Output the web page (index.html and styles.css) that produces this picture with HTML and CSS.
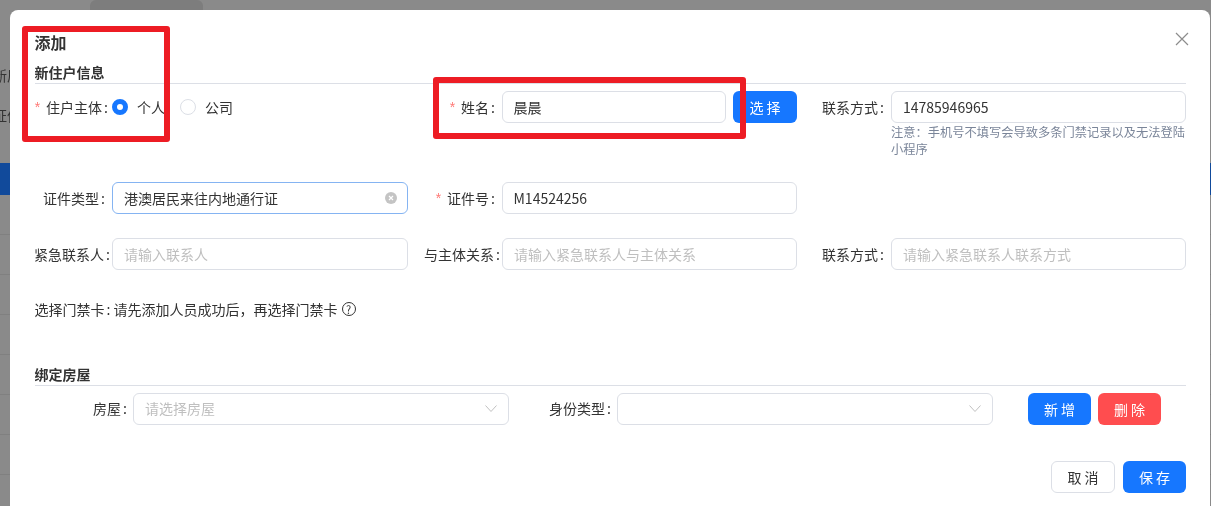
FILE: index.html
```html
<!DOCTYPE html>
<html lang="zh-CN">
<head>
<meta charset="utf-8">
<title>添加</title>
<link rel="stylesheet" href="styles.css">
</head>
<body>
<div class="page">
  <div class="backdrop">
    <div class="top-bar"><span class="top-pill"></span></div>
    <div class="bg-line">新居</div>
    <div class="bg-line">证件</div>
    <div class="bg-blue"></div>
    <div class="bg-row"></div><div class="bg-row"></div><div class="bg-row"></div>
    <div class="bg-row"></div><div class="bg-row"></div><div class="bg-row"></div>
    <div class="bg-row"></div>
  </div>

  <div class="modal">
    <svg class="close" viewBox="0 0 14 14" aria-label="关闭"><path d="M1 1l12 12M13 1L1 13"/></svg>
    <h2 class="title">添加</h2>
    <h3 class="section">新住户信息</h3>

    <div class="grid row-first">
      <div class="field">
        <label class="label label-radio"><i class="star">*</i>住户主体<b class="colon">:</b></label>
        <div class="radios">
          <span class="radio radio-on"></span><span class="radio-text">个人</span>
          <span class="radio"></span><span class="radio-text">公司</span>
        </div>
      </div>
      <div class="field">
        <label class="label"><i class="star">*</i>姓名<b class="colon">:</b></label>
        <div class="input input-name">晨晨</div>
        <button class="btn btn-primary btn-pick">选 择</button>
      </div>
      <div class="field field-top">
        <label class="label">联系方式<b class="colon">:</b></label>
        <div class="stack">
          <div class="input">14785946965</div>
          <p class="note">注意：手机号不填写会导致多条门禁记录以及无法登陆小程序</p>
        </div>
      </div>
    </div>

    <div class="grid row">
      <div class="field">
        <label class="label">证件类型<b class="colon">:</b></label>
        <div class="input input-focus">港澳居民来往内地通行证
          <svg class="clear" viewBox="0 0 12 12"><circle cx="6" cy="6" r="6"/><path d="M4 4l4 4M8 4l-4 4"/></svg>
        </div>
      </div>
      <div class="field">
        <label class="label"><i class="star">*</i>证件号<b class="colon">:</b></label>
        <div class="input input-id">M14524256</div>
      </div>
    </div>

    <div class="grid row">
      <div class="field">
        <label class="label label-tight">紧急联系人<b class="colon">:</b></label>
        <div class="input input-empty">请输入联系人</div>
      </div>
      <div class="field">
        <label class="label label-tight">与主体关系<b class="colon">:</b></label>
        <div class="input input-empty">请输入紧急联系人与主体关系</div>
      </div>
      <div class="field">
        <label class="label">联系方式<b class="colon">:</b></label>
        <div class="input input-empty">请输入紧急联系人联系方式</div>
      </div>
    </div>

    <div class="card-row">选择门禁卡<b class="colon">:</b> 请先添加人员成功后，再选择门禁卡<span class="help">?</span></div>

    <h3 class="section section-house">绑定房屋</h3>
    <div class="house">
      <div class="field">
        <label class="label label-grow">房屋<b class="colon">:</b></label>
        <div class="input input-empty input-select">请选择房屋
          <svg class="chev" viewBox="0 0 12 7"><path d="M.5.5L6 6.5 11.5.5"/></svg>
        </div>
      </div>
      <div class="field">
        <label class="label label-grow">身份类型<b class="colon">:</b></label>
        <div class="input input-select">
          <svg class="chev" viewBox="0 0 12 7"><path d="M.5.5L6 6.5 11.5.5"/></svg>
        </div>
      </div>
      <div class="house-actions">
        <button class="btn btn-primary btn-small">新 增</button>
        <button class="btn btn-danger btn-small">删 除</button>
      </div>
    </div>

    <div class="footer">
      <button class="btn btn-default">取 消</button>
      <button class="btn btn-primary btn-small">保 存</button>
    </div>
  </div>

  <div class="mark mark-a"></div>
  <div class="mark mark-b"></div>
</div>
</body>
</html>
```
FILE: styles.css
```css
* { box-sizing: border-box; }
html, body { margin: 0; height: 100%; background: #8a8a8a; }
body { overflow: hidden; font-family: "Noto Sans CJK SC", "Noto Sans", sans-serif; font-size: 14px; color: #333; }

.page { position: relative; width: 1211px; height: 506px; overflow: hidden; filter: blur(.35px); }

.backdrop { height: 506px; background: #8a8a8a; color: #333; }
.top-bar { height: 55px; padding-left: 90px; }
.top-pill { display: block; width: 113px; height: 10px; background: #7d7d7d; border-top-left-radius: 6px; border-top-right-radius: 6px; }
.bg-line { height: 40px; font-size: 14px; line-height: 40px; margin-left: -7px; }
.bg-blue { height: 32px; margin-top: 28px; background: #114a9b; }
.bg-row { height: 40px; border-bottom: 1px solid #808080; }

.modal { position: absolute; left: 10px; top: 10px; width: 1200px; height: 520px; padding: 21px 24px 0 25px; background: #fff; border-radius: 8px; }
.close { position: absolute; left: 1165px; top: 22px; width: 14px; height: 14px; fill: none; stroke: #8c8c8c; stroke-width: 1.2; }
.title { margin: 0; font-size: 16px; line-height: 22px; font-weight: 700; color: #333; text-indent: -.5px; }
.section { margin: 8px 0 0; height: 23px; font-size: 14px; line-height: 22px; font-weight: 700; color: #333; border-bottom: 1px solid #dcdfe6; text-indent: -.5px; }
.section-house { margin-top: 43px; }

.grid { display: grid; grid-template-columns: repeat(3, 373px); column-gap: 16px; }
.row-first { margin-top: 7px; }
.row { margin-top: 24px; }

.field { display: flex; align-items: center; height: 32px; }
.field-top { align-items: flex-start; height: auto; }
.label { flex: 0 0 77px; min-width: 0; display: flex; align-items: center; justify-content: flex-end; height: 32px; padding-right: 7px; white-space: nowrap; line-height: 32px; }
.grid > .field + .field > .label { flex-basis: 78px; }
.label-tight { padding-right: 2px; }
.label-radio { padding-right: 4px; }
.label-grow { flex: 1 1 auto; padding: 0 6px 2px 0; }
.grid > .field + .field > .label-tight { padding-right: 2px; }
.colon { font-weight: 400; margin-left: 2px; }
.star { font-family: "Liberation Sans", sans-serif; font-style: normal; color: #ff7875; margin-right: 6px; }

.input { position: relative; flex: 1 1 auto; width: 100%; height: 32px; padding: 0 11px; border: 1px solid #dcdfe6; border-radius: 6px; line-height: 30px; color: #333; background: #fff; white-space: nowrap; }
.input-name, .input-id { padding-left: 10.5px; }
.input-name { flex: 0 0 224px; width: 224px; }
.input-focus { border-color: #85b4f2; }
.input-empty { color: #bfbfbf; }
.input-select { flex: 0 0 376px; width: 376px; line-height: 28px; }
.clear { position: absolute; right: 10px; top: 9px; width: 12px; height: 12px; }
.clear circle { fill: #c4c4c4; }
.clear path { stroke: #fff; stroke-width: 1.2; fill: none; }
.chev { position: absolute; right: 11px; top: 11px; width: 12px; height: 7px; fill: none; stroke: #c0c0c0; stroke-width: 1; }

.stack { flex: 1 1 auto; min-width: 0; }
.note { margin: 1px 0 0; font-size: 12.25px; line-height: 17px; color: #7a8599; }

.radios { display: flex; align-items: center; height: 32px; }
.radio { width: 16px; height: 16px; border: 1px solid #dcdfe6; border-radius: 50%; background: #fff; }
.radio-on { border: 5px solid #1677ff; }
.radio-text { margin: 0 15px 0 9px; }

.btn { height: 32px; padding: 0; border: 0; border-radius: 6px; font: inherit; width: 64px; }
.btn-small { width: 63px; }
.btn-primary { background: #1677ff; color: #fff; }
.btn-danger { background: #ff4d4f; color: #fff; }
.btn-default { background: #fff; border: 1px solid #dcdfe6; color: #333; }
.btn-pick { margin-left: 7px; flex: 0 0 64px; }

.card-row { margin-top: 28px; height: 22px; line-height: 22px; display: flex; align-items: center; white-space: pre; margin-left: -.5px; }
.help { width: 14px; height: 14px; margin-left: 4px; border: 1px solid #333; border-radius: 50%; font-size: 11px; line-height: 12px; text-align: center; }

.house { display: grid; grid-template-columns: 474px 474px auto; column-gap: 10px; margin-top: 7px; }
.house-actions { display: flex; gap: 7px; margin-left: 25px; }

.footer { display: flex; justify-content: flex-end; gap: 8px; margin-top: 36px; }

.mark { position: absolute; border: 6px solid #ed1c24; border-radius: 3px; }
.mark-a { left: 22px; top: 26px; width: 148px; height: 116px; }
.mark-b { left: 433px; top: 77px; width: 313px; height: 62px; }
```
